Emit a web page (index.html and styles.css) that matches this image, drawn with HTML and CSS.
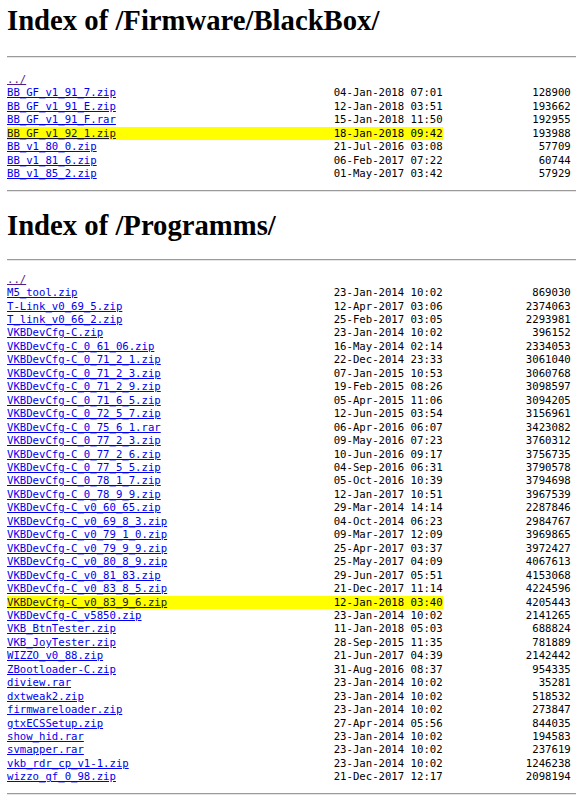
FILE: index.html
```html
<!DOCTYPE html>
<html>
<head>
<meta charset="utf-8">
<title>Index of /Firmware/BlackBox/</title>
<link rel="stylesheet" href="styles.css">
</head>
<body>
<section class="section first">
<h1>Index of /Firmware/BlackBox/</h1>
<hr>
<div class="listing">
<div class="row"><a class="up" href="../">../</a></div>
<div class="row"><a href="#">BB_GF_v1_91_7.zip</a><span>04-Jan-2018 07:01</span><span class="size">128900</span></div>
<div class="row"><a href="#">BB_GF_v1_91_E.zip</a><span>12-Jan-2018 03:51</span><span class="size">193662</span></div>
<div class="row"><a href="#">BB_GF_v1_91_F.rar</a><span>15-Jan-2018 11:50</span><span class="size">192955</span></div>
<div class="row hl"><a href="#">BB_GF_v1_92_1.zip</a><span>18-Jan-2018 09:42</span><span class="size">193988</span></div>
<div class="row"><a href="#">BB_v1_80_0.zip</a><span>21-Jul-2016 03:08</span><span class="size">57709</span></div>
<div class="row"><a href="#">BB_v1_81_6.zip</a><span>06-Feb-2017 07:22</span><span class="size">60744</span></div>
<div class="row"><a href="#">BB_v1_85_2.zip</a><span>01-May-2017 03:42</span><span class="size">57929</span></div>
</div>
<hr>
</section>
<section class="section second">
<h1>Index of /Programms/</h1>
<hr>
<div class="listing">
<div class="row"><a class="up" href="../">../</a></div>
<div class="row"><a href="#">M5_tool.zip</a><span>23-Jan-2014 10:02</span><span class="size">869030</span></div>
<div class="row"><a href="#">T-Link_v0_69_5.zip</a><span>12-Apr-2017 03:06</span><span class="size">2374063</span></div>
<div class="row"><a href="#">T_link_v0_66_2.zip</a><span>25-Feb-2017 03:05</span><span class="size">2293981</span></div>
<div class="row"><a href="#">VKBDevCfg-C.zip</a><span>23-Jan-2014 10:02</span><span class="size">396152</span></div>
<div class="row"><a href="#">VKBDevCfg-C_0_61_06.zip</a><span>16-May-2014 02:14</span><span class="size">2334053</span></div>
<div class="row"><a href="#">VKBDevCfg-C_0_71_2_1.zip</a><span>22-Dec-2014 23:33</span><span class="size">3061040</span></div>
<div class="row"><a href="#">VKBDevCfg-C_0_71_2_3.zip</a><span>07-Jan-2015 10:53</span><span class="size">3060768</span></div>
<div class="row"><a href="#">VKBDevCfg-C_0_71_2_9.zip</a><span>19-Feb-2015 08:26</span><span class="size">3098597</span></div>
<div class="row"><a href="#">VKBDevCfg-C_0_71_6_5.zip</a><span>05-Apr-2015 11:06</span><span class="size">3094205</span></div>
<div class="row"><a href="#">VKBDevCfg-C_0_72_5_7.zip</a><span>12-Jun-2015 03:54</span><span class="size">3156961</span></div>
<div class="row"><a href="#">VKBDevCfg-C_0_75_6_1.rar</a><span>06-Apr-2016 06:07</span><span class="size">3423082</span></div>
<div class="row"><a href="#">VKBDevCfg-C_0_77_2_3.zip</a><span>09-May-2016 07:23</span><span class="size">3760312</span></div>
<div class="row"><a href="#">VKBDevCfg-C_0_77_2_6.zip</a><span>10-Jun-2016 09:17</span><span class="size">3756735</span></div>
<div class="row"><a href="#">VKBDevCfg-C_0_77_5_5.zip</a><span>04-Sep-2016 06:31</span><span class="size">3790578</span></div>
<div class="row"><a href="#">VKBDevCfg-C_0_78_1_7.zip</a><span>05-Oct-2016 10:39</span><span class="size">3794698</span></div>
<div class="row"><a href="#">VKBDevCfg-C_0_78_9_9.zip</a><span>12-Jan-2017 10:51</span><span class="size">3967539</span></div>
<div class="row"><a href="#">VKBDevCfg-C_v0_60_65.zip</a><span>29-Mar-2014 14:14</span><span class="size">2287846</span></div>
<div class="row"><a href="#">VKBDevCfg-C_v0_69_8_3.zip</a><span>04-Oct-2014 06:23</span><span class="size">2984767</span></div>
<div class="row"><a href="#">VKBDevCfg-C_v0_79_1_0.zip</a><span>09-Mar-2017 12:09</span><span class="size">3969865</span></div>
<div class="row"><a href="#">VKBDevCfg-C_v0_79_9_9.zip</a><span>25-Apr-2017 03:37</span><span class="size">3972427</span></div>
<div class="row"><a href="#">VKBDevCfg-C_v0_80_8_9.zip</a><span>25-May-2017 04:09</span><span class="size">4067613</span></div>
<div class="row"><a href="#">VKBDevCfg-C_v0_81_83.zip</a><span>29-Jun-2017 05:51</span><span class="size">4153068</span></div>
<div class="row"><a href="#">VKBDevCfg-C_v0_83_8_5.zip</a><span>21-Dec-2017 11:14</span><span class="size">4224596</span></div>
<div class="row hl"><a href="#">VKBDevCfg-C_v0_83_9_6.zip</a><span>12-Jan-2018 03:40</span><span class="size">4205443</span></div>
<div class="row"><a href="#">VKBDevCfg-C_v5850.zip</a><span>23-Jan-2014 10:02</span><span class="size">2141265</span></div>
<div class="row"><a href="#">VKB_BtnTester.zip</a><span>11-Jan-2018 05:03</span><span class="size">688824</span></div>
<div class="row"><a href="#">VKB_JoyTester.zip</a><span>28-Sep-2015 11:35</span><span class="size">781889</span></div>
<div class="row"><a href="#">WIZZO_v0_88.zip</a><span>21-Jun-2017 04:39</span><span class="size">2142442</span></div>
<div class="row"><a href="#">ZBootloader-C.zip</a><span>31-Aug-2016 08:37</span><span class="size">954335</span></div>
<div class="row"><a href="#">diview.rar</a><span>23-Jan-2014 10:02</span><span class="size">35281</span></div>
<div class="row"><a href="#">dxtweak2.zip</a><span>23-Jan-2014 10:02</span><span class="size">518532</span></div>
<div class="row"><a href="#">firmwareloader.zip</a><span>23-Jan-2014 10:02</span><span class="size">273847</span></div>
<div class="row"><a href="#">gtxECSSetup.zip</a><span>27-Apr-2014 05:56</span><span class="size">844035</span></div>
<div class="row"><a href="#">show_hid.rar</a><span>23-Jan-2014 10:02</span><span class="size">194583</span></div>
<div class="row"><a href="#">svmapper.rar</a><span>23-Jan-2014 10:02</span><span class="size">237619</span></div>
<div class="row"><a href="#">vkb_rdr_cp_v1-1.zip</a><span>23-Jan-2014 10:02</span><span class="size">1246238</span></div>
<div class="row"><a href="#">wizzo_gf_0_98.zip</a><span>21-Dec-2017 12:17</span><span class="size">2098194</span></div>
</div>
<hr>
</section>
</body>
</html>
```
FILE: styles.css
```css
html, body {
  background: #ffffff;
}
body {
  margin: 0 0 0 7px;
  color: #000000;
  font-family: "Liberation Serif", "Times New Roman", serif;
}
h1 {
  font-size: 28.7px;
  line-height: 33px;
  font-weight: bold;
  margin: 4px 0 19px;
}
.second h1 {
  margin: 17px 0 17px;
}
hr {
  height: 0;
  margin: 0;
  border: 0;
  border-top: 1px solid #9a9a9a;
  border-bottom: 1px solid #e6e6e6;
}
.listing {
  font-family: "DejaVu Sans Mono", "Liberation Mono", monospace;
  font-size: 10.65px;
  line-height: 13.45px;
  margin: 15px 0 9px;
}
.second .listing {
  margin: 12px 0 9px;
}
.row {
  display: grid;
  grid-template-columns: 51ch 17ch 20ch;
  white-space: pre;
}
.size {
  text-align: right;
}
.row.hl {
  background: linear-gradient(to right, #ffff00 68ch, transparent 68ch);
}
a {
  color: #0000ee;
  text-decoration: underline;
}
a.up {
  color: #551a8b;
}
.hl a {
  color: #1a1a1a;
}
```
